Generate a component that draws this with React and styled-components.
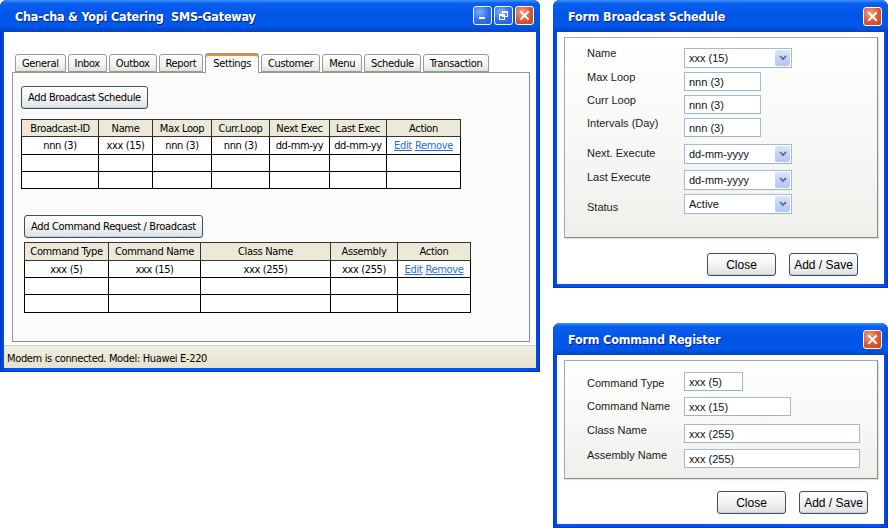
import React from "react";
import styled, { createGlobalStyle } from "styled-components";

const tahoma = `"Tahoma", "DejaVu Sans Condensed", "Liberation Sans", sans-serif`;
const arial = `"Liberation Sans", Arial, sans-serif`;

const GlobalStyle = createGlobalStyle`
    html, body {
        margin: 0;
        background: #ffffff;
        font-family: ${tahoma};
    }
`;

const Desktop = styled.div`
    position: relative;
    width: 888px;
    height: 528px;
    overflow: hidden;
    background: #ffffff;
`;

/* windows sit on a free canvas, so they are placed by coordinates */
const Window = styled.div`
    position: absolute;
    left: ${(p) => p.$x}px;
    top: ${(p) => p.$y}px;
    width: ${(p) => p.$w}px;
    height: ${(p) => p.$h}px;
    display: flex;
    flex-direction: column;
    box-sizing: border-box;
    padding: 0 4px 4px;
    border-radius: 7px 7px 0 0;
    background: linear-gradient(to right, #0046d6, #0058ee 3%, #0058ee 97%, #0046d6);
    box-shadow: inset 0 0 0 1px #0831d9;
`;

const TitleBar = styled.div`
    height: 32px;
    margin: 0 -4px;
    padding: 0 6px 0 15px;
    display: flex;
    align-items: center;
    justify-content: space-between;
    border-radius: 7px 7px 0 0;
    background: linear-gradient(
        to bottom,
        #3d95ff 0%,
        #0a5fef 10%,
        #0055e8 45%,
        #0058ea 80%,
        #0244c8 100%
    );
    color: #ffffff;
`;

const TitleText = styled.span`
    font-family: "DejaVu Sans Condensed", "Open Sans", sans-serif;
    font-weight: bold;
    font-size: 12.5px;
    letter-spacing: -0.2px;
    text-shadow: 1px 1px 0 #0a1e8c;
`;

const Controls = styled.div`
    display: flex;
    gap: 2px;
    margin-top: -1px;
`;

const CtrlButton = styled.div`
    width: 19px;
    height: 19px;
    box-sizing: border-box;
    border: 1px solid #ffffff;
    border-radius: 3px;
    display: flex;
    align-items: center;
    justify-content: center;
    background: ${(p) =>
        p.$close
            ? "radial-gradient(circle at 35% 30%, #f4a088, #e2552d 55%, #c3401d)"
            : "radial-gradient(circle at 35% 30%, #7fb0ff, #2f6df0 55%, #2458d8)"};
`;

const Client = styled.div`
    flex: 1;
    display: flex;
    flex-direction: column;
    background: #ffffff;
    min-height: 0;
`;

/* main window */
const MainBody = styled.div`
    flex: 1;
    display: flex;
    flex-direction: column;
    padding: 22px 6px 3px 8px;
    letter-spacing: -0.35px;
`;

const TabStrip = styled.div`
    display: flex;
    align-items: flex-end;
    gap: 2px;
    height: 18px;
    padding-left: 3px;
    position: relative;
    z-index: 1;
`;

const Tab = styled.div`
    box-sizing: border-box;
    height: ${(p) => (p.$active ? 20 : 18)}px;
    padding: 0 ${(p) => (p.$active ? 7 : 6)}px;
    display: flex;
    align-items: center;
    font-size: 11px;
    color: #000000;
    border: 1px solid #919b9c;
    border-bottom: ${(p) => (p.$active ? "none" : "1px solid #919b9c")};
    border-radius: 3px 3px 0 0;
    background: ${(p) =>
        p.$active
            ? "#fcfcfe"
            : "linear-gradient(to bottom, #ffffff, #f3f3ef 60%, #e3e3dc)"};
    box-shadow: ${(p) => (p.$active ? "inset 0 2px 0 #e68b2c" : "none")};
    margin-bottom: ${(p) => (p.$active ? -1 : 0)}px;
`;

const TabPanel = styled.div`
    height: 270px;
    box-sizing: border-box;
    border: 1px solid #919b9c;
    border-right-color: #7f8a8c;
    border-bottom-color: #7f8a8c;
    background: #fbfbf9;
    padding: 13px 0 0 8px;
    display: flex;
    flex-direction: column;
    align-items: flex-start;
`;

const Section = styled.div`
    display: flex;
    flex-direction: column;
    align-items: flex-start;
    gap: ${(p) => p.$gap}px;
    margin: ${(p) => p.$margin};
`;

const XPButton = styled.button`
    box-sizing: border-box;
    height: 23px;
    width: ${(p) => (p.$w ? `${p.$w}px` : "auto")};
    padding: 0 ${(p) => (p.$w ? 0 : 6)}px;
    white-space: nowrap;
    font-family: ${(p) => (p.$arial ? arial : tahoma)};
    font-size: ${(p) => (p.$arial ? 12 : 11)}px;
    letter-spacing: ${(p) => (p.$arial ? 0 : -0.35)}px;
    color: #000000;
    border: 1px solid #3c5064;
    border-radius: 3px;
    background: linear-gradient(to bottom, #ffffff, #f4f4f2 45%, #e2e5ea 90%, #d3d8e0);
    box-shadow: inset 0 -1px 0 #c9d0da;
    cursor: pointer;
`;

const Grid = styled.table`
    border-collapse: collapse;
    table-layout: fixed;
    background: #ffffff;
    font-size: 11px;

    th,
    td {
        border: 1px solid #000000;
        padding: 0;
        text-align: center;
        white-space: nowrap;
        overflow: hidden;
    }
    th {
        height: 16px;
        font-weight: normal;
        background: #ece9d8;
        border-color: #333333;
    }
    td {
        height: 16px;
    }
`;

const Link = styled.a`
    color: #1f6fcf;
    text-decoration: underline;
    & + & {
        margin-left: 3px;
    }
`;

const StatusBar = styled.div`
    height: 23px;
    box-sizing: border-box;
    padding: 3px 0 0 3px;
    display: flex;
    align-items: center;
    font-size: 11px;
    letter-spacing: -0.35px;
    background: linear-gradient(to bottom, #f1efe3, #ece9d8 40%, #e5e2d0);
    border-top: 1px solid #d6d2c2;
`;

/* dialogs */
const DialogBody = styled.div`
    flex: 1;
    display: flex;
    flex-direction: column;
    padding: 5px 6px 0 7px;
`;

const FieldPanel = styled.div`
    height: ${(p) => p.$h}px;
    box-sizing: border-box;
    border: 1px solid #a7a7a7;
    border-right-color: #8d8d8d;
    border-bottom-color: #8d8d8d;
    background: linear-gradient(to bottom, #ffffff, #f6f6f4 60%, #efefec);
    box-shadow: 1px 1px 1px rgba(0, 0, 0, 0.12);
    padding: ${(p) => p.$pad};
    display: flex;
    flex-direction: column;
    gap: ${(p) => p.$gap}px;
`;

const FieldRow = styled.div`
    display: grid;
    grid-template-columns: 97px auto;
    align-items: start;
    margin-top: ${(p) => p.$mt || 0}px;
`;

const Label = styled.span`
    font-family: ${arial};
    font-size: 11px;
    color: #1a1a1a;
    line-height: 13px;
    margin-top: ${(p) => p.$mt || 0}px;
`;

const TextBox = styled.div`
    box-sizing: border-box;
    width: ${(p) => p.$w}px;
    height: ${(p) => p.$h || 19}px;
    border: 1px solid #a5b9d0;
    border-bottom-color: #9db3cb;
    background: #ffffff;
    padding-left: 4px;
    display: flex;
    align-items: center;
    font-family: ${arial};
    font-size: 11px;
    color: #111111;
`;

const SelectBox = styled(TextBox)`
    justify-content: space-between;
    padding-right: 1px;
`;

const DropArrow = styled.div`
    width: 15px;
    height: 16px;
    border-radius: 2px;
    display: flex;
    align-items: center;
    justify-content: center;
    background: linear-gradient(to bottom, #dbe5fb, #c0d1f6 60%, #b2c6f1);
`;

const ButtonRow = styled.div`
    display: flex;
    justify-content: flex-end;
    gap: 13px;
    padding-right: ${(p) => p.$right}px;
    margin-top: ${(p) => p.$top}px;
`;

const MinimizeIcon = () => (
    <svg width="11" height="11" viewBox="0 0 11 11">
        <rect x="2" y="7" width="6" height="2" fill="#fff" />
    </svg>
);

const RestoreIcon = () => (
    <svg width="11" height="11" viewBox="0 0 11 11" fill="none" stroke="#fff">
        <rect x="4.5" y="1.5" width="5" height="5" />
        <line x1="4" y1="2" x2="10" y2="2" strokeWidth="2" />
        <rect x="1.5" y="4.5" width="5" height="5" />
        <line x1="1" y1="5" x2="7" y2="5" strokeWidth="2" />
    </svg>
);

const CloseIcon = () => (
    <svg width="11" height="11" viewBox="0 0 11 11">
        <path d="M2 2 L9 9 M9 2 L2 9" stroke="#fff" strokeWidth="2" strokeLinecap="square" />
    </svg>
);

const Chevron = () => (
    <svg width="8" height="6" viewBox="0 0 8 6">
        <path d="M1 1 L4 4 L7 1" fill="none" stroke="#4d6185" strokeWidth="1.6" />
    </svg>
);

const Select = ({ value, width }) => (
    <SelectBox $w={width} $h={20}>
        <span>{value}</span>
        <DropArrow>
            <Chevron />
        </DropArrow>
    </SelectBox>
);

const tabs = [
    "General",
    "Inbox",
    "Outbox",
    "Report",
    "Settings",
    "Customer",
    "Menu",
    "Schedule",
    "Transaction",
];

const broadcastCols = [
    ["Broadcast-ID", 77, "nnn (3)"],
    ["Name", 54, "xxx (15)"],
    ["Max Loop", 59, "nnn (3)"],
    ["Curr.Loop", 58, "nnn (3)"],
    ["Next Exec", 60, "dd-mm-yy"],
    ["Last Exec", 57, "dd-mm-yy"],
    ["Action", 74, null],
];

const commandCols = [
    ["Command Type", 84, "xxx (5)"],
    ["Command Name", 92, "xxx (15)"],
    ["Class Name", 130, "xxx (255)"],
    ["Assembly", 67, "xxx (255)"],
    ["Action", 73, null],
];

const DataTable = ({ cols, heights }) => (
    <Grid>
        <colgroup>
            {cols.map(([name, w]) => (
                <col key={name} style={{ width: w }} />
            ))}
        </colgroup>
        <thead>
            <tr>
                {cols.map(([name]) => (
                    <th key={name} style={{ height: heights[0] }}>
                        {name}
                    </th>
                ))}
            </tr>
        </thead>
        <tbody>
            {[0, 1, 2].map((r) => (
                <tr key={r}>
                    {cols.map(([name, , sample]) => (
                        <td key={name} style={{ height: heights[r + 1] }}>
                            {r === 0 &&
                                (sample || (
                                    <>
                                        <Link>Edit</Link>
                                        <Link>Remove</Link>
                                    </>
                                ))}
                        </td>
                    ))}
                </tr>
            ))}
        </tbody>
    </Grid>
);

const App = () => {
    return (
        <Desktop>
            <GlobalStyle />

            <Window $x={0} $y={0} $w={540} $h={372}>
                <TitleBar>
                    <TitleText>Cha-cha &amp; Yopi Catering&nbsp; SMS-Gateway</TitleText>
                    <Controls>
                        <CtrlButton>
                            <MinimizeIcon />
                        </CtrlButton>
                        <CtrlButton>
                            <RestoreIcon />
                        </CtrlButton>
                        <CtrlButton $close>
                            <CloseIcon />
                        </CtrlButton>
                    </Controls>
                </TitleBar>
                <Client>
                    <MainBody>
                        <TabStrip>
                            {tabs.map((t) => (
                                <Tab key={t} $active={t === "Settings"}>
                                    {t}
                                </Tab>
                            ))}
                        </TabStrip>
                        <TabPanel>
                            <Section $gap={10} $margin="0">
                                <XPButton>Add Broadcast Schedule</XPButton>
                                <DataTable cols={broadcastCols} heights={[16, 17, 16, 16]} />
                            </Section>
                            <Section $gap={4} $margin="26px 0 0 3px">
                                <XPButton>Add Command Request / Broadcast</XPButton>
                                <DataTable cols={commandCols} heights={[17, 16, 16, 17]} />
                            </Section>
                        </TabPanel>
                    </MainBody>
                    <StatusBar>Modem is connected. Model: Huawei E-220</StatusBar>
                </Client>
            </Window>

            <Window $x={553} $y={0} $w={335} $h={288}>
                <TitleBar>
                    <TitleText>Form Broadcast Schedule</TitleText>
                    <CtrlButton $close>
                        <CloseIcon />
                    </CtrlButton>
                </TitleBar>
                <Client>
                    <DialogBody>
                        <FieldPanel $h={201} $pad="10px 0 0 22px" $gap={4}>
                            <FieldRow>
                                <Label $mt={-1}>Name</Label>
                                <Select value="xxx (15)" width={108} />
                            </FieldRow>
                            <FieldRow>
                                <Label $mt={-1}>Max Loop</Label>
                                <TextBox $w={77}>nnn (3)</TextBox>
                            </FieldRow>
                            <FieldRow>
                                <Label $mt={-1}>Curr Loop</Label>
                                <TextBox $w={77}>nnn (3)</TextBox>
                            </FieldRow>
                            <FieldRow>
                                <Label $mt={-1}>Intervals (Day)</Label>
                                <TextBox $w={77}>nnn (3)</TextBox>
                            </FieldRow>
                            <FieldRow $mt={3}>
                                <Label $mt={3}>Next. Execute</Label>
                                <Select value="dd-mm-yyyy" width={108} />
                            </FieldRow>
                            <FieldRow $mt={2}>
                                <Label $mt={1}>Last Execute</Label>
                                <Select value="dd-mm-yyyy" width={108} />
                            </FieldRow>
                            <FieldRow>
                                <Label $mt={7}>Status</Label>
                                <Select value="Active" width={108} />
                            </FieldRow>
                        </FieldPanel>
                        <ButtonRow $right={20} $top={15}>
                            <XPButton $arial $w={69}>Close</XPButton>
                            <XPButton $arial $w={69}>Add / Save</XPButton>
                        </ButtonRow>
                    </DialogBody>
                </Client>
            </Window>

            <Window $x={553} $y={323} $w={335} $h={205}>
                <TitleBar>
                    <TitleText>Form Command Register</TitleText>
                    <CtrlButton $close>
                        <CloseIcon />
                    </CtrlButton>
                </TitleBar>
                <Client>
                    <DialogBody>
                        <FieldPanel $h={119} $pad="11px 0 0 22px" $gap={6}>
                            <FieldRow>
                                <Label $mt={5}>Command Type</Label>
                                <TextBox $w={59}>xxx (5)</TextBox>
                            </FieldRow>
                            <FieldRow>
                                <Label $mt={3}>Command Name</Label>
                                <TextBox $w={107}>xxx (15)</TextBox>
                            </FieldRow>
                            <FieldRow $mt={2}>
                                <Label $mt={0}>Class Name</Label>
                                <TextBox $w={176}>xxx (255)</TextBox>
                            </FieldRow>
                            <FieldRow>
                                <Label $mt={0}>Assembly Name</Label>
                                <TextBox $w={176}>xxx (255)</TextBox>
                            </FieldRow>
                        </FieldPanel>
                        <ButtonRow $right={10} $top={12}>
                            <XPButton $arial $w={69}>Close</XPButton>
                            <XPButton $arial $w={69}>Add / Save</XPButton>
                        </ButtonRow>
                    </DialogBody>
                </Client>
            </Window>
        </Desktop>
    );
};

export default App;
